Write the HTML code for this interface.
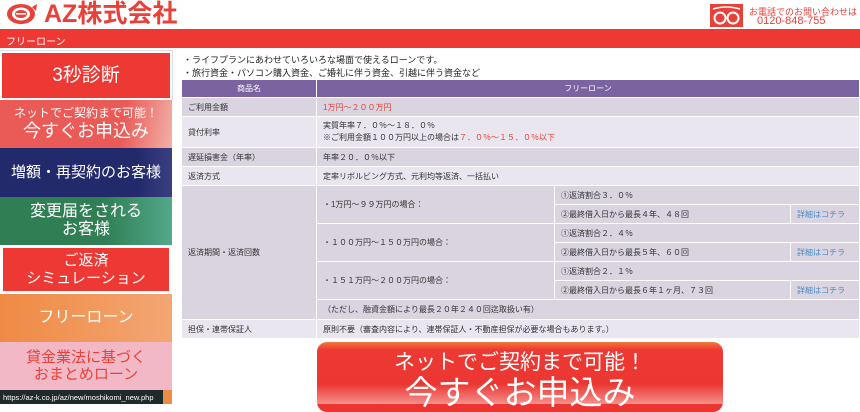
<!DOCTYPE html>
<html><head><meta charset="utf-8"><style>
*{margin:0;padding:0;box-sizing:border-box}
body{width:860px;height:404px;overflow:hidden;background:#fff;font-family:"Liberation Sans","Noto Sans CJK JP",sans-serif;position:relative}
.a{position:absolute;white-space:nowrap}
.menu{position:absolute;left:0;width:172px;color:#fff;text-align:center;display:flex;flex-direction:column;justify-content:center;line-height:1.15}
.c{position:absolute;font-size:8px;color:#333;display:flex;align-items:center;padding-left:6px;white-space:nowrap}
.l{background:#dad4e0}.m{background:#e9e6ef}
.red{color:#e8413a}.lnk{color:#4a8cc8}
</style></head><body>
<!-- header -->
<div class="a" style="left:6px;top:3px;width:32px;height:22px">
<svg width="32" height="22" viewBox="0 0 32 22"><ellipse cx="15" cy="11" rx="14" ry="10" fill="#e8413a"/><ellipse cx="15" cy="11" rx="9" ry="6.5" fill="#fff"/><ellipse cx="15" cy="11" rx="6" ry="4" fill="#e8413a"/><rect x="10" y="10" width="10" height="1.6" fill="#fff"/><path d="M26 4 L31 1 L30 8Z" fill="#e8413a"/></svg></div>
<div class="a" style="left:44px;top:0px;font-size:25px;font-weight:bold;color:#e8413a;line-height:28px">AZ株式会社</div>
<div class="a" style="left:710px;top:4px;width:33px;height:23px;background:#e8413a"><svg width="33" height="23"><circle cx="10" cy="14" r="5.5" fill="none" stroke="#fff" stroke-width="2"/><circle cx="23" cy="14" r="5.5" fill="none" stroke="#fff" stroke-width="2"/><path d="M3 5 Q16 1 30 5" stroke="#fff" stroke-width="1.5" fill="none"/></svg></div>
<div class="a" style="left:749px;top:5px;font-size:9px;color:#e8413a">お電話でのお問い合わせは</div>
<div class="a" style="left:757px;top:15px;font-size:11px;color:#e8413a">0120-848-755</div>
<div class="a" style="left:0;top:29px;width:860px;height:19px;background:#ed3833;color:#fff;font-size:10px;padding:4px 0 0 6px">フリーローン</div>
<!-- sidebar -->
<div class="menu" style="top:51px;height:49px;background:#ed3833;border:2px solid #fff;outline:1px solid #ddd;font-size:19px">3秒診断</div>
<div class="menu" style="top:100px;height:48px;background:linear-gradient(100deg,#ea5a56 70%,#f2b0a8 100%)"><div style="font-size:12px">ネットでご契約まで可能！</div><div style="font-size:18px">今すぐお申込み</div></div>
<div class="menu" style="top:148px;height:49px;background:linear-gradient(90deg,#232a6c 80%,#3a3f80);font-size:15px">増額・再契約のお客様</div>
<div class="menu" style="top:197px;height:48px;background:linear-gradient(90deg,#2f7e54 60%,#53a88a);font-size:16px">変更届をされる<br>お客様</div>
<div class="menu" style="top:245px;height:49px;background:#ed3833;border:3px solid #fff;font-size:15px">ご返済<br>シミュレーション</div>
<div class="menu" style="top:294px;height:48px;background:linear-gradient(90deg,#ef8a44,#f3a673);font-size:16px">フリーローン</div>
<div class="menu" style="top:342px;height:48px;background:#f3b8c6;color:#e8413a;font-size:15px">貸金業法に基づく<br>おまとめローン</div>
<div class="a" style="left:0;top:390px;width:172px;height:14px;background:#ef8a44"></div>
<div class="a" style="left:0;top:390px;width:163px;height:14px;background:#1f2a2a;color:#fff;font-size:7.5px;padding:3px 0 0 3px">https://az-k.co.jp/az/new/moshikomi_new.php</div>
<!-- content -->
<div class="a" style="left:183px;top:53px;font-size:9px;color:#222">・ライフプランにあわせていろいろな場面で使えるローンです。</div>
<div class="a" style="left:183px;top:66px;font-size:9px;color:#222">・旅行資金・パソコン購入資金、ご婚礼に伴う資金、引越に伴う資金など</div>
<div class="c" style="left:182px;top:80px;width:134px;height:17px;background:#7b62a0;color:#fff;justify-content:center;padding:0">商品名</div>
<div class="c" style="left:317px;top:80px;width:542px;height:17px;background:#7b62a0;color:#fff;justify-content:center;padding:0">フリーローン</div>
<div class="c l" style="left:182px;top:98px;width:134px;height:18px">ご利用金額</div>
<div class="c l red" style="left:317px;top:98px;width:542px;height:18px">1万円～２００万円</div>
<div class="c m" style="left:182px;top:117px;width:134px;height:30px">貸付利率</div>
<div class="c m" style="left:317px;top:117px;width:542px;height:30px;flex-direction:column;align-items:flex-start;justify-content:center;line-height:12px">実質年率７．０％～１８．０％<span>※ご利用金額１００万円以上の場合は<span class="red">７．０％～１５．０％以下</span></span></div>
<div class="c l" style="left:182px;top:148px;width:134px;height:18px">遅延損害金（年率）</div>
<div class="c l" style="left:317px;top:148px;width:542px;height:18px">年率２０．０％以下</div>
<div class="c m" style="left:182px;top:167px;width:134px;height:18px">返済方式</div>
<div class="c m" style="left:317px;top:167px;width:542px;height:18px">定率リボルビング方式、元利均等返済、一括払い</div>
<div class="c l" style="left:182px;top:186px;width:134px;height:133px">返済期間・返済回数</div>
<div class="c l" style="left:317px;top:186px;width:237px;height:37px">・1万円～９９万円の場合：</div>
<div class="c l" style="left:317px;top:224px;width:237px;height:37px">・１００万円～１５０万円の場合：</div>
<div class="c l" style="left:317px;top:262px;width:237px;height:37px">・１５１万円～２００万円の場合：</div>
<div class="c l" style="left:555px;top:186px;width:304px;height:18px">①返済割合３．０％</div>
<div class="c l" style="left:555px;top:205px;width:235px;height:18px">②最終借入日から最長４年、４８回</div>
<div class="c l lnk" style="left:791px;top:205px;width:68px;height:18px">詳細はコチラ</div>
<div class="c l" style="left:555px;top:224px;width:304px;height:18px">①返済割合２．４％</div>
<div class="c l" style="left:555px;top:243px;width:235px;height:18px">②最終借入日から最長５年、６０回</div>
<div class="c l lnk" style="left:791px;top:243px;width:68px;height:18px">詳細はコチラ</div>
<div class="c l" style="left:555px;top:262px;width:304px;height:18px">①返済割合２．１％</div>
<div class="c l" style="left:555px;top:281px;width:235px;height:18px">②最終借入日から最長６年１ヶ月、７３回</div>
<div class="c l lnk" style="left:791px;top:281px;width:68px;height:18px">詳細はコチラ</div>
<div class="c l" style="left:317px;top:300px;width:542px;height:19px">（ただし、融資金額により最長２０年２４０回迄取扱い有）</div>
<div class="c m" style="left:182px;top:320px;width:134px;height:18px">担保・連帯保証人</div>
<div class="c m" style="left:317px;top:320px;width:542px;height:18px">原則不要（審査内容により、連帯保証人・不動産担保が必要な場合もあります。）</div>
<!-- big button -->
<div class="a" style="left:317px;top:342px;width:406px;height:70px;border-radius:10px;background:linear-gradient(180deg,#f0793a 0,#ed3833 8px,#ec3530 100%);color:#fff;text-align:center">
<div style="font-size:21px;margin-top:9px;line-height:24px">ネットでご契約まで可能！</div>
<div style="font-size:33px;line-height:36px">今すぐお申込み</div></div>
<div class="a" style="left:172px;top:384px;width:688px;height:20px;background:linear-gradient(180deg,rgba(255,255,255,0),rgba(255,255,255,.45))"></div>
</body></html>
